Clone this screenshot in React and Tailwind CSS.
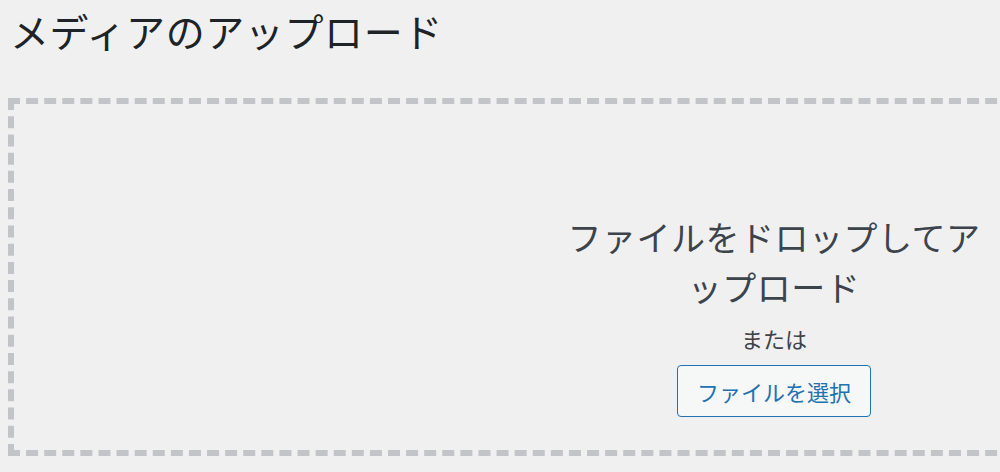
import React from "react";

export default function App() {
  const font = { fontFamily: '"Noto Sans CJK JP", "Noto Sans", sans-serif' };
  return (
    <div className="w-[1000px] h-[472px] overflow-hidden bg-[#f0f0f1]" style={font}>
      <div className="pl-[8px]">
        <h1 className="pl-[2px] pt-[4px] text-[39px] tracking-[0.6px] leading-[52px] text-[#1d2327] font-normal">
          メディアのアップロード
        </h1>
        <div className="mt-[42px] w-[1532px] h-[358px] border-[6px] border-dashed border-[#c3c4c7] flex flex-col items-center">
          <div className="mt-[108px] w-[430px] text-center text-[34px] tracking-[0.5px] leading-[50px] text-[#3c434a]">
            ファイルをドロップしてアップロード
          </div>
          <div className="mt-[12px] text-[22px] leading-[28px] text-[#3c434a]">または</div>
          <button className="mt-[13px] w-[194px] h-[52px] border border-[#2271b1] rounded-[4px] bg-[#f6f7f7] text-[#2271b1] text-[22px] leading-[28px]">
            ファイルを選択
          </button>
        </div>
      </div>
    </div>
  );
}
